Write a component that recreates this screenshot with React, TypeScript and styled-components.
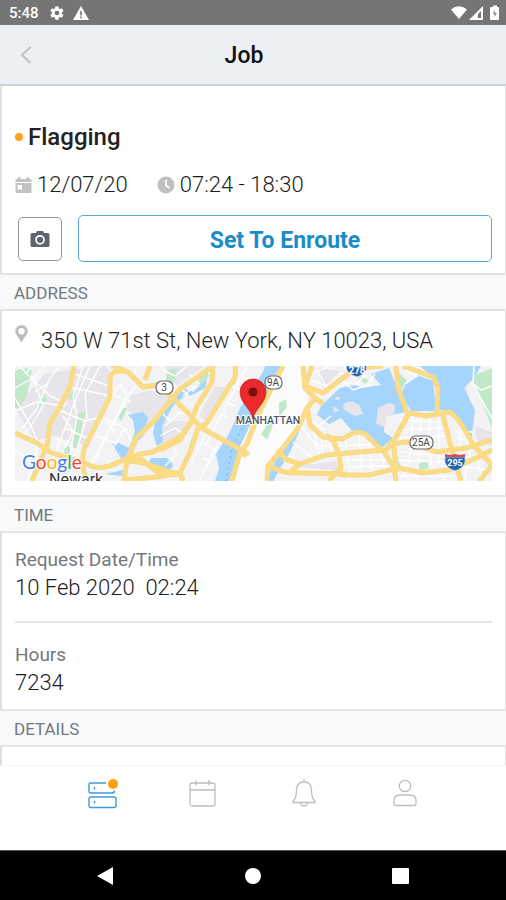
import React from "react";
import styled, { createGlobalStyle } from "styled-components";

const GlobalStyle = createGlobalStyle`
  * { box-sizing: border-box; }
  body { margin: 0; background: #fff; font-family: Roboto, "Liberation Sans", sans-serif; color: #1c1c1c; }
  button { font-family: inherit; padding: 0; cursor: pointer; }
  h1, h2, p, dl, dd, dt { margin: 0; font-weight: 400; }
`;

const Screen = styled.div`
  height: 100vh;
  display: flex;
  flex-direction: column;
  overflow: hidden;
`;

const StatusBar = styled.div`
  height: 25px;
  flex: none;
  display: flex;
  align-items: center;
  justify-content: space-between;
  padding: 0 6px 0 9px;
  background: #757575;
  color: #fff;
`;

const StatusGroup = styled.div<{ $gap: number }>`
  display: flex;
  align-items: center;
  gap: ${(p) => p.$gap}px;
  font-size: 15px;
  font-weight: 500;
  svg { display: block; }
`;

const Clock = styled.span`
  width: 32px;
  line-height: 25px;
  padding-top: 2px;
`;

const Header = styled.header`
  height: 61px;
  flex: none;
  display: grid;
  grid-template-columns: 52px 1fr 52px;
  align-items: center;
  background: #ecf0f4;
  border-bottom: 2px solid #cdcfd1;
`;

const BackButton = styled.button`
  height: 44px;
  display: flex;
  align-items: center;
  justify-content: center;
  border: 0;
  background: none;
`;

const Title = styled.h1`
  text-align: center;
  font-size: 23px;
  font-weight: 500;
  line-height: 28px;
  color: #111;
  padding: 3px 18px 0 0;
`;

const Content = styled.main`
  flex: 1;
  min-height: 0;
  overflow: hidden;
`;

const Card = styled.section<{ $top: number; $bottom: number }>`
  padding: ${(p) => p.$top}px 13px ${(p) => p.$bottom}px 13px;
  border-left: 2px solid #dedfe0;
  border-right: 1px solid #dedfe0;
  background: #fff;
`;

const SectionHeading = styled.h2`
  height: 38px;
  padding: 0 14px;
  border: solid #e2e4e5;
  border-width: 2px 0;
  background: #f7f9fb;
  font-size: 17px;
  line-height: 36px;
  color: #74787c;
`;

const JobName = styled.div`
  display: flex;
  align-items: center;
  gap: 5px;
  font-size: 24px;
  font-weight: 500;
  line-height: 32px;
  color: #222;
`;

const Dot = styled.span`
  width: 8px;
  height: 8px;
  flex: none;
  border-radius: 4px;
  background: #ff9f1a;
`;

const Schedule = styled.div`
  display: flex;
  gap: 29px;
  margin-top: 18px;
`;

const ScheduleItem = styled.div`
  display: flex;
  align-items: center;
  gap: 5px;
  font-size: 22px;
  font-weight: 300;
  line-height: 28px;
`;

const Actions = styled.div`
  display: flex;
  align-items: center;
  gap: 16px;
  margin-top: 16px;
  padding-left: 3px;
`;

const CameraButton = styled.button`
  width: 44px;
  height: 44px;
  flex: none;
  display: flex;
  align-items: center;
  justify-content: center;
  border: 1px solid #8f9296;
  border-radius: 5px;
  background: #fff;
`;

const PrimaryButton = styled.button`
  flex: 1;
  height: 47px;
  padding-top: 3px;
  border: 1px solid #5ba9d8;
  border-radius: 5px;
  background: #fff;
  color: #1a8cc8;
  font-size: 23px;
  font-weight: 700;
`;

const Address = styled.p`
  display: flex;
  align-items: flex-start;
  gap: 13px;
  font-size: 22px;
  font-weight: 300;
  line-height: 28px;
  svg { flex: none; }
  span { padding-top: 2px; }
`;

const MapLink = styled.a`
  display: block;
  height: 115px;
  margin-top: 11px;
  svg { display: block; width: 100%; height: 100%; }
`;

const Field = styled.div<{ $divided?: boolean }>`
  padding-bottom: ${(p) => (p.$divided ? 19 : 0)}px;
  margin-bottom: ${(p) => (p.$divided ? 18 : 0)}px;
  border-bottom: ${(p) => (p.$divided ? "2px solid #e4e5e6" : "0")};
`;

const FieldLabel = styled.dt`
  font-size: 19px;
  line-height: 28px;
  color: #74787c;
`;

const FieldValue = styled.dd`
  font-size: 22px;
  && { font-weight: 300; }
  line-height: 28px;
  white-space: pre;
`;

const TabBar = styled.nav`
  height: 85px;
  flex: none;
  display: grid;
  grid-template-columns: repeat(4, 1fr);
  align-items: start;
  padding: 4px 51px 0;
  border-top: 1px solid #f6f6f6;
  background: #fff;
`;

const Tab = styled.button`
  height: 46px;
  display: flex;
  align-items: center;
  justify-content: center;
  border: 0;
  background: none;
`;

const SystemNav = styled.nav`
  height: 50px;
  flex: none;
  display: grid;
  grid-template-columns: repeat(3, 1fr);
  padding: 0 32px;
  border-top: 1px solid #555;
  background: #000;
`;

const SystemButton = styled.button`
  display: flex;
  align-items: center;
  justify-content: center;
  border: 0;
  background: none;
`;

const minorRoads = [
  "M0 22L18 12 30 0M0 45L22 36 50 40M4 0L35 30 52 38M18 12L28 40 16 60 24 78",
  "M8 62L22 42 35 12 45 0M0 84L20 98 12 115M22 77L20 115M38 92L50 62 62 30 75 0",
  "M44 44L70 55 85 51M55 21L95 30M60 8L100 22M50 62L72 72M40 72L65 86M68 0L58 30 62 50 55 90",
  "M85 0L70 28 72 50 60 90M48 50L58 65 50 82M100 10L92 0M0 32L16 60 8 70M10 8L16 2M32 18L20 26",
  "M105 18L112 30 96 60 80 96M120 20L104 48 88 75 76 98M90 52L110 62 98 82M82 70L102 78M105 18L90 42",
  "M122 0L118 12M100 30L116 36M92 55L100 68M110 62L118 78M150 60L165 46 182 52M145 70L160 62 172 72",
  "M150 100L162 88 155 76M148 48L156 56M180 20L168 30M190 80L210 42 232 0M184 115L205 74M175 100L200 48 224 4",
  "M195 64L204 70M192 80L202 86M188 92L196 96M204 48L214 52M210 36L220 40M216 20L228 25M224 10L236 15",
  "M148 4L160 10 172 0M150 12L140 24M174 8L185 18M300 6L315 0M296 14L312 20M302 4L312 22M306 70L308 92",
  "M285 48L310 64M286 60L302 80M278 76L298 92M298 60L304 88M314 72L318 92M300 78L322 82M268 94L290 106",
  "M330 74L336 108M344 68L347 108M354 76L358 109M366 88L370 104M322 80L360 78M326 94L372 94M324 101L376 100",
  "M385 54L420 56M382 64L428 62M381 72L432 70M398 50L394 98M406 50L404 96M414 50L416 100M424 52L424 98",
  "M376 94L432 96M386 86L430 90M390 98L388 112M400 104L402 115M416 104L414 115M426 104L430 115M440 66L458 66",
  "M442 72L462 76M446 60L444 84M452 74L456 92M462 88L466 110M442 100L474 104M452 98L450 115M384 110L440 110",
  "M350 8L342 18 328 16M355 18L338 24 326 14M360 8L352 20M316 50L304 60M330 110L336 115M390 4L402 10 390 18",
];

const mainRoads = [
  "M59 0L55 21 43 44 35 57 32 81 27 91 17 115",
  "M0 67L22 77 35 86 52 92 70 97Q84 106 102 97Q118 88 138 86L165 71 177 56",
  "M130 14L135 0M98 0L113 6 128 21 142 19M113 6Q95 2 95 14V31L85 51 72 77Q64 90 71 115",
  "M198 0L197 16 182 40 177 54 165 74 145 84M195 2L165 23 140 54 122 71 112 94 109 115",
  "M112 94L132 98 165 109M109 114L142 111 165 107 168 115M112 92L123 91 142 106 165 107",
  "M142 19L158 32 177 51 185 61 208 74 232 87 228 90",
  "M220 0Q222 12 215 19L192 57 183 62 175 86 165 107",
  "M268 0L253 29 242 52 232 78 225 86 217 115",
  "M288 0L290 22 300 32 292 42 283 62 265 86 253 100 252 115M297 0L290 20 308 27 328 12 341 2 368 0",
  "M292 40L295 59 308 71 328 73Q345 60 354 72L369 86 379 102 381 115M300 32L308 38",
  "M262 84L272 94 285 98 311 89 344 86 371 84 381 71 393 49 383 22 381 0",
  "M252 99Q268 108 285 107L331 108M285 98L276 105M311 69L319 76 324 89 326 102 314 115",
  "M394 47L411 50 434 46Q444 50 458 79L477 99M388 0L418 11 423 22 422 47",
  "M428 49L433 69 439 92 446 115M371 84Q376 76 394 76L421 86 451 82 477 74",
  "M379 81L381 104M326 109L354 109 384 102 408 107 434 104 461 92 477 84M464 115L477 99",
];

const waterAreas = [
  "M248 6L250 0H265L250 30 237 55 225 80 214 115H200L204 102 201 88 215 66 225 42Z",
  "M325 22L340 19 348 22 366 19 356 8 374 2 383 24 392 46 370 50 369 66 378 72 367 82 354 70 338 66 326 52 314 58 302 49 306 40Z",
  "M391 17L402 9 418 15 421 45 396 45 386 28Z",
  "M405 0H466L459 12 449 22 460 44 456 76 436 45 424 44 424 17 414 8Z",
  "M113 49L128 46 133 52 128 70 120 78 118 88 106 92 97 78 104 77 114 82 120 66 118 54Z",
  "M140 54L155 40 166 24 171 29 158 40 147 60 148 76 142 80 138 68Z",
  "M168 22L178 26 192 13 190 22 175 30ZM136 92L152 92 157 98 148 102 134 97ZM90 108L108 104 107 110Z",
  "M280 64L284 66 276 84 258 115H251L262 92ZM145 94Q156 90 158 101L152 105 146 104Z",
];

const parks = [
  "M0 5Q10 0 17 4L12 30 4 42H0ZM22 38L30 28 31 36 24 42ZM53 30L58 25 60 34 55 34Z",
  "M61 48L71 46 68 54 62 84 57 82ZM49 84L54 78 56 88 50 88ZM103 50L108 42 112 42 106 56Z",
  "M152 4L162 2 160 16 150 20ZM183 10L191 2 194 10 184 22ZM264 37L271 33 272 41 264 51ZM254 56L260 54 252 74 246 68Z",
  "M462 8L477 2V62L462 24 458 14ZM382 6L392 14 386 24ZM404 98L412 94 414 103 404 104ZM376 97L383 90 386 104 378 108ZM340 8L354 14 350 18Z",
];

function MapView() {
  return (
    <svg viewBox="0 0 477 115" preserveAspectRatio="xMidYMid slice" role="img" aria-label="Map of Manhattan">
      <rect width="477" height="115" fill="#f3f2f4" />
      <g fill="#e7e5e9">
        <path d="M0 42L30 8 80 0 98 0 92 40 70 80 40 70 20 75ZM112 30L135 24 155 32 134 58 112 44ZM145 54L175 56 162 72 145 78ZM150 0H190L162 20Z" />
        <path d="M200 20L214 22 192 56 184 50ZM302 2L325 5 308 22ZM440 12L452 22 456 40 444 32ZM460 60L477 66V80L462 74ZM280 100L322 95V105Z" />
      </g>
      <path d="M268 0H288L290 22 294 40 280 66 252 98 250 115H218L242 52Z" fill="#fbfbfb" />
      <path d={parks.join("")} fill="#c0e8c9" />
      <path d={waterAreas.join("")} fill="#a5d5fd" />
      <g fill="#e7e5e9">
        <path d="M328 38Q336 32 345 40L348 48 340 50 329 44ZM321 31L325 31 324 34 320 34ZM318 40L324 44 319 47Z" />
        <path d="M363 42L373 37 380 39 379 48 371 50 370 61 361 58Z" />
      </g>
      <path d={minorRoads.join("")} fill="none" stroke="#fff" strokeWidth="1.4" />
      <path d="M459 0L458 18 470 40 477 52M458 18L466 24 477 20" fill="none" stroke="#f6fff7" strokeWidth="1.6" />
      <path d="M249 20L234 52 218 78 211 115" fill="none" stroke="#7ba9cf" strokeWidth="1" strokeDasharray="2 4" />
      <path d={mainRoads.join("")} fill="none" stroke="#f5d985" strokeWidth="5" strokeLinejoin="round" />
      <path d={mainRoads.join("")} fill="none" stroke="#fbdb84" strokeWidth="3.6" strokeLinejoin="round" />
      <g fill="#fff" stroke="#6c6c6c" strokeWidth="1.2">
        <rect x="141" y="15" width="17" height="13" rx="6" />
        <rect x="250" y="10" width="17" height="13" rx="6" />
        <rect x="395" y="70" width="23" height="13" rx="6" />
      </g>
      <g fontFamily="Roboto, sans-serif" fontSize="10" fill="#444" textAnchor="middle">
        <text x="149" y="25">3</text>
        <text x="258" y="20">9A</text>
        <text x="406" y="80">25A</text>
      </g>
      <g>
        <path d="M331 0H352Q352 8 342 11Q331 8 331 0Z" fill="#2563b0" stroke="#fff" strokeWidth=".6" />
        <path d="M430 91H450Q452 101 440 105Q428 101 430 91Z" fill="#2563b0" stroke="#fff" strokeWidth=".6" />
        <path d="M430 88L435 89 440 88 445 89 450 88V91H430Z" fill="#d94a4a" />
      </g>
      <g fontFamily="Roboto, sans-serif" fontWeight="700" fill="#fff" textAnchor="middle">
        <text x="342" y="8" fontSize="10">278</text>
        <text x="440" y="100" fontSize="9">295</text>
      </g>
      <text x="253" y="58" fontFamily="Roboto, sans-serif" fontSize="10.5" fontWeight="500" textAnchor="middle" fill="#4a5866" stroke="#fff" strokeWidth="2" paintOrder="stroke">MANHATTAN</text>
      <text x="34" y="119" fontFamily="Roboto, sans-serif" fontSize="16" fill="#333" stroke="#fff" strokeWidth="2" paintOrder="stroke">Newark</text>
      <path d="M238 53C237 44 225 37 225 26A13 13 0 0 1 251 26C251 37 239 44 238 53Z" fill="#ea2a2d" stroke="#c3201f" strokeWidth=".7" />
      <circle cx="238" cy="26" r="4.6" fill="#7b100f" />
      <text x="7" y="103" fontFamily="Lato, sans-serif" fontSize="19" fontWeight="400" stroke="#fff" strokeWidth="2" paintOrder="stroke">
        <tspan fill="#3b7ded">G</tspan><tspan fill="#e94335">o</tspan><tspan fill="#f6b70b">o</tspan><tspan fill="#3b7ded">g</tspan><tspan fill="#34a853">l</tspan><tspan fill="#e94335">e</tspan>
      </text>
    </svg>
  );
}

const GearIcon = () => (
  <svg width="16" height="16" viewBox="0 0 24 24" fill="#fff">
    <path d="M19.4 13a7.500 7.500 0 0 0 0-2l2.100-1.600a.5.5 0 0 0 .1-.6l-2-3.500a.5.5 0 0 0-.6-.2l-2.500 1a7.300 7.300 0 0 0-1.700-1l-.4-2.600a.5.5 0 0 0-.5-.4h-4a.5.5 0 0 0-.5.4L9 5.100a7.700 7.700 0 0 0-1.700 1l-2.500-1a.5.5 0 0 0-.6.200l-2 3.500a.5.5 0 0 0 .1.600L4.500 11a8 8 0 0 0 0 2l-2.200 1.600a.5.5 0 0 0-.1.600l2 3.500c.1.200.4.300.6.200l2.500-1a7.300 7.300 0 0 0 1.700 1l.4 2.600c0 .3.200.5.500.5h4c.3 0 .5-.2.500-.5l.4-2.600a7.700 7.700 0 0 0 1.700-1l2.500 1c.2.100.5 0 .6-.2l2-3.500a.5.5 0 0 0-.1-.6zM12 15.500a3.500 3.500 0 1 1 0-7 3.500 3.500 0 0 1 0 7z" />
  </svg>
);

const WarningIcon = () => (
  <svg width="16" height="14" viewBox="0 0 16 14">
    <path d="M8 0L16 14H0Z" fill="#fff" />
    <path d="M7.200 5h1.600v4.500H7.200zM7.200 10.600h1.600v1.600H7.200z" fill="#757575" />
  </svg>
);

const SignalIcons = () => (
  <svg width="50" height="16" viewBox="0 0 50 16">
    <path d="M1 4.500Q9 -2 17 4.500L9 14Z" fill="#fff" />
    <path d="M33 1V15H19Z" fill="#fff" />
    <path d="M31 6V13H28V9Z" fill="#757575" />
    <path d="M41 2h2V.5h4V2h1q1 0 1 1v11q0 1-1 1h-7q-1 0-1-1V3q0-1 1-1Z" fill="#fff" />
    <path d="M45 4.500L43 9H44.500V12L47 8H45Z" fill="#858585" />
  </svg>
);

const BackIcon = () => (
  <svg width="12" height="18" viewBox="0 0 12 18" fill="none" stroke="#bfc2c5" strokeWidth="2">
    <path d="M10.500 1L2 9 10.500 17" />
  </svg>
);

const DateIcon = () => (
  <svg width="17" height="18" viewBox="0 0 17 18" fill="#c3c3c3">
    <path d="M3 1h2.500v2h6V1H14v2h1.500q1 0 1 1v2H.5V4q0-1 1-1H3Z" />
    <path fillRule="evenodd" d="M.5 7h16v9q0 1-1 1h-14q-1 0-1-1ZM2.500 9v4.500h4.500V9Z" />
  </svg>
);

const TimeIcon = () => (
  <svg width="18" height="18" viewBox="0 0 18 18">
    <circle cx="9" cy="9" r="8.500" fill="#c0c0c0" />
    <path d="M9 4V9.500L12.500 12" fill="none" stroke="#fff" strokeWidth="1.800" />
  </svg>
);

const CameraIcon = () => (
  <svg width="20" height="18" viewBox="0 0 20 18">
    <path d="M2 3h4l1-2h6l1 2h4q1.500 0 1.500 1.500v11q0 1.500-1.500 1.500H2Q.5 17 .5 15.500v-11Q.5 3 2 3Z" fill="#5d6570" />
    <circle cx="10" cy="9.800" r="4" fill="none" stroke="#fff" strokeWidth="1.700" />
  </svg>
);

const PinIcon = () => (
  <svg width="13" height="18" viewBox="0 0 13 18" fill="#bdbdbd">
    <path fillRule="evenodd" d="M6.500 0a6.200 6.200 0 0 1 6.200 6.200C12.700 10 9 12 6.500 17.500C4 12 .3 10 .3 6.200A6.200 6.200 0 0 1 6.500 0ZM6.500 3a3.200 3.200 0 1 0 0 6.400a3.200 3.200 0 0 0 0-6.400Z" />
  </svg>
);

const JobsIcon = () => (
  <svg width="32" height="32" viewBox="0 0 32 32" fill="none" stroke="#3e9bd3" strokeWidth="1.400">
    <path d="M20 6H4.500Q3 6 3 7.500V14.500Q3 16 4.500 16H26Q28.500 16 28.500 13.500" />
    <rect x="3" y="20" width="27" height="10.500" rx="2" />
    <path d="M8.500 10V12.500M8.500 24V26.500" />
    <circle cx="27" cy="7" r="5" fill="#ff9f0f" stroke="none" />
  </svg>
);

const CalendarIcon = () => (
  <svg width="27" height="27" viewBox="0 0 27 27" fill="none" stroke="#bdbdbd" strokeWidth="1.300">
    <rect x="1" y="3" width="25" height="23" rx="2" />
    <path d="M1 10H26M7 0V5.500M20 0V5.500" />
  </svg>
);

const BellIcon = () => (
  <svg width="24" height="28" viewBox="0 0 24 28" fill="none" stroke="#bdbdbd" strokeWidth="1.300">
    <path d="M12 0V3M12 3C6.500 3 4.500 7 4.500 11C4.500 17 3.500 20 1 22V23.500H23V22C20.500 20 19.500 17 19.500 11C19.500 7 17.500 3 12 3Z" />
    <path d="M8.500 24Q9 27 12 27T15.500 24" />
  </svg>
);

const ProfileIcon = () => (
  <svg width="24" height="28" viewBox="0 0 24 28" fill="none" stroke="#bdbdbd" strokeWidth="1.300">
    <circle cx="12" cy="7" r="5.700" />
    <path d="M3 26.500Q1 26.500 1 24.500V21.500Q1 16 7 16H17Q23 16 23 21.500V24.500Q23 26.500 21 26.500Z" />
  </svg>
);

const tabs = [
  { label: "Jobs", icon: <JobsIcon /> },
  { label: "Calendar", icon: <CalendarIcon /> },
  { label: "Notifications", icon: <BellIcon /> },
  { label: "Profile", icon: <ProfileIcon /> },
];

const systemButtons = [
  { label: "Back", shape: <path d="M16 0V18L0 9Z" /> },
  { label: "Home", shape: <circle cx="9" cy="9" r="8" /> },
  { label: "Overview", shape: <rect x="1" y="1" width="17" height="16" rx="1" /> },
];

export default function App() {
  return (
    <>
      <GlobalStyle />
      <Screen>
        <StatusBar>
          <StatusGroup $gap={8}>
            <Clock>5:48</Clock>
            <GearIcon />
            <WarningIcon />
          </StatusGroup>
          <StatusGroup $gap={0}>
            <SignalIcons />
          </StatusGroup>
        </StatusBar>
        <Header>
          <BackButton aria-label="Go back"><BackIcon /></BackButton>
          <Title>Job</Title>
        </Header>
        <Content>
          <Card $top={35} $bottom={11}>
            <JobName><Dot />Flagging</JobName>
            <Schedule>
              <ScheduleItem><DateIcon />12/07/20</ScheduleItem>
              <ScheduleItem><TimeIcon />07:24 - 18:30</ScheduleItem>
            </Schedule>
            <Actions>
              <CameraButton aria-label="Take photo"><CameraIcon /></CameraButton>
              <PrimaryButton>Set To Enroute</PrimaryButton>
            </Actions>
          </Card>
          <SectionHeading>ADDRESS</SectionHeading>
          <Card $top={14} $bottom={14}>
            <Address><PinIcon /><span>350 W 71st St, New York, NY 10023, USA</span></Address>
            <MapLink href="#map" aria-label="Open map"><MapView /></MapLink>
          </Card>
          <SectionHeading>TIME</SectionHeading>
          <Card as="dl" $top={13} $bottom={12}>
            <Field $divided>
              <FieldLabel>Request Date/Time</FieldLabel>
              <FieldValue>{"10 Feb 2020  02:24"}</FieldValue>
            </Field>
            <Field>
              <FieldLabel>Hours</FieldLabel>
              <FieldValue>7234</FieldValue>
            </Field>
          </Card>
          <SectionHeading>DETAILS</SectionHeading>
          <Card $top={40} $bottom={40} />
        </Content>
        <TabBar>
          {tabs.map((tab) => (
            <Tab key={tab.label} aria-label={tab.label}>{tab.icon}</Tab>
          ))}
        </TabBar>
        <SystemNav>
          {systemButtons.map((button) => (
            <SystemButton key={button.label} aria-label={button.label}>
              <svg width="18" height="18" viewBox="0 0 18 18" fill="#fff">{button.shape}</svg>
            </SystemButton>
          ))}
        </SystemNav>
      </Screen>
    </>
  );
}
